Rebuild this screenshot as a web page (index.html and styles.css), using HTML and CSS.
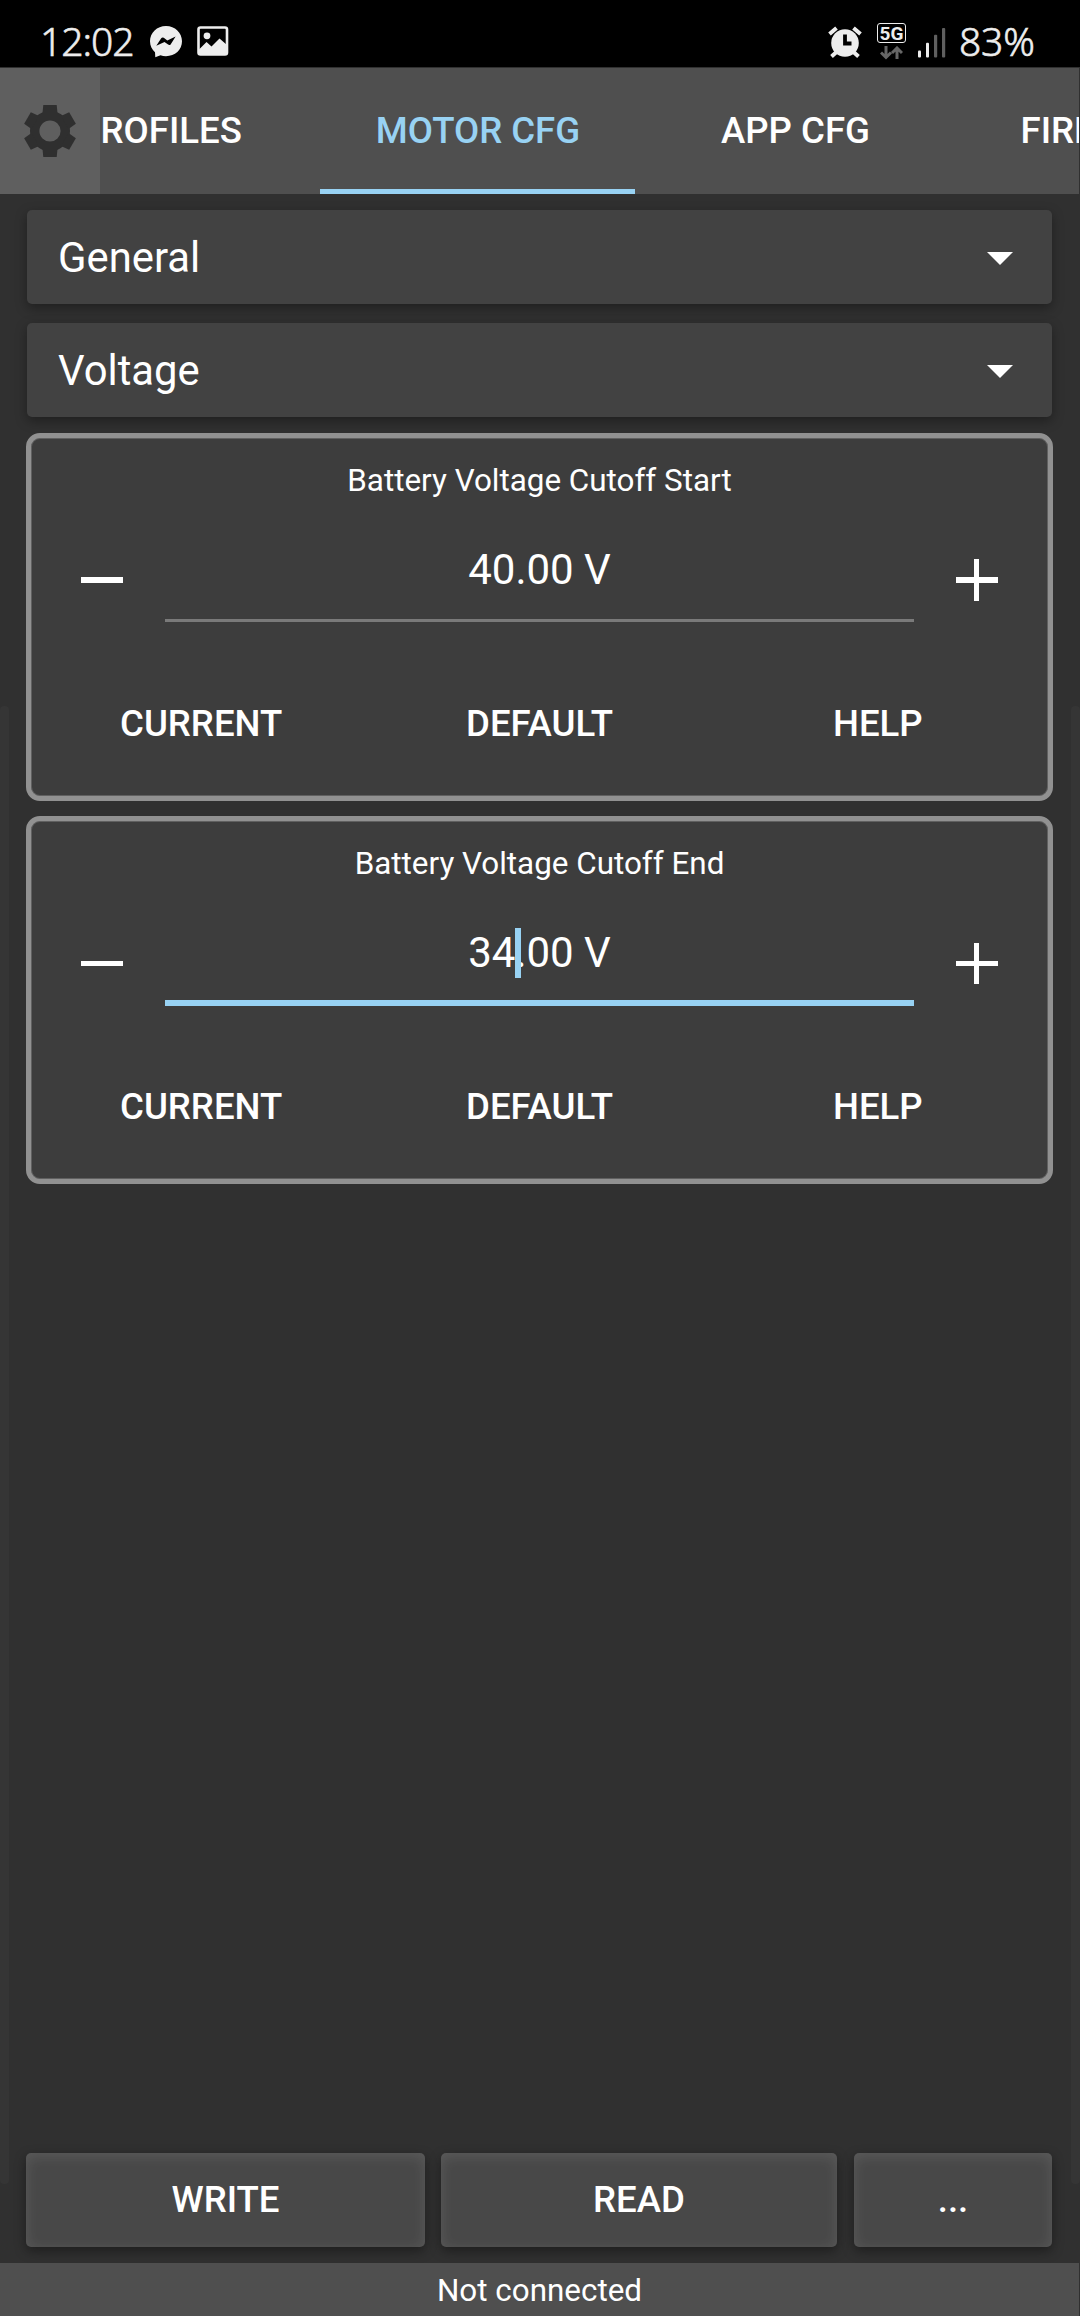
FILE: index.html
```html
<!DOCTYPE html>
<html lang="en">
<head>
<meta charset="utf-8">
<title>Motor configuration</title>
<link rel="stylesheet" href="styles.css">
</head>
<body>
<div class="screen">
  <header class="status">
    <span class="clock">12:02</span>
    <svg class="ic-messenger" width="32" height="32" viewBox="0 0 32 32">
      <path fill="#ededed" d="M16 0C7 0 0 6.600 0 15.300C0 19.800 2 23.700 5 26.300L5.300 31.300L10.500 29.300C12.200 29.900 14 30.200 16 30.200C25 30.200 32 23.800 32 15.300C32 6.600 25 0 16 0Z"/>
      <path fill="#000" d="M6.300 19.800L11.200 12.200Q12.300 10.800 13.800 11.800L17.300 14.500L25.600 10.500L20.800 18.200Q19.600 19.700 18.100 18.600L14.500 15.900Z"/>
    </svg>
    <svg class="ic-photo" width="32" height="30" viewBox="0 0 32 30">
      <rect x="1.500" y="1.500" width="28.500" height="27" rx="2" fill="none" stroke="#ededed" stroke-width="2.600"/>
      <circle cx="10" cy="9.800" r="3.400" fill="#ededed"/>
      <path fill="#ededed" d="M2 23.500L9.500 16L14.500 20.500L22.500 12.500L30 19V28.500H2Z"/>
    </svg>
    <span class="spacer"></span>
    <svg class="ic-alarm" width="34" height="32" viewBox="0 0 34 32">
      <g fill="none" stroke="#ededed" stroke-width="4">
        <path d="M1.500 8L8.500 2M32.500 8L25.500 2M8.500 26L3.500 30.500M25.500 26L30.500 30.500"/>
      </g>
      <circle cx="17" cy="17" r="13.800" fill="#ededed"/>
      <path d="M17 8.500V17.500H23.500" fill="none" stroke="#000" stroke-width="3.800"/>
    </svg>
    <div class="net">
      <span class="net-label">5G</span>
      <svg width="23" height="14" viewBox="0 0 23 14" fill="none" stroke="#666" stroke-width="3">
        <path d="M6 0V11M1 6.500L6 11.500L11 6.500M17 13V2M12 7L17 2L22 7"/>
      </svg>
    </div>
    <svg class="ic-signal" width="28" height="30" viewBox="0 0 28 30">
      <rect x="0" y="22.500" width="3" height="7" rx="1" fill="#ededed"/>
      <rect x="8" y="14.700" width="3" height="14.800" rx="1" fill="#ededed"/>
      <rect x="16" y="6.700" width="3.200" height="22.800" rx="1" fill="#5f5f5f"/>
      <rect x="24" y="0" width="3.200" height="29.500" rx="1" fill="#5f5f5f"/>
    </svg>
    <span class="battery">83%</span>
  </header>

  <nav class="topbar">
    <button class="gear" aria-label="Settings">
      <svg width="54" height="54" viewBox="-27 -27 54 54">
        <circle r="15.300" fill="none" stroke="#2f2f2f" stroke-width="9.400"/>
        <g fill="#2f2f2f">
          <path id="tooth" d="M-6.700 -26H6.700L7.600 -17H-7.600Z"/>
          <use href="#tooth" transform="rotate(60)"/>
          <use href="#tooth" transform="rotate(120)"/>
          <use href="#tooth" transform="rotate(180)"/>
          <use href="#tooth" transform="rotate(240)"/>
          <use href="#tooth" transform="rotate(300)"/>
        </g>
      </svg>
    </button>
    <div class="tabs">
      <div class="tab tab-first">PROFILES</div>
      <div class="tab active">MOTOR CFG</div>
      <div class="tab">APP CFG</div>
      <div class="tab">FIRMWARE</div>
    </div>
  </nav>

  <main class="content">
    <div class="select"><span>General</span><svg width="26" height="13" viewBox="0 0 26 13"><path d="M0 0H26L13 13Z" fill="#fff"/></svg></div>
    <div class="select"><span>Voltage</span><svg width="26" height="13" viewBox="0 0 26 13"><path d="M0 0H26L13 13Z" fill="#fff"/></svg></div>

    <section class="card">
      <h2 class="card-title">Battery Voltage Cutoff Start</h2>
      <div class="spin">
        <svg class="sign" width="42" height="42" viewBox="0 0 42 42"><path d="M0 18H42V24H0Z" fill="#fff"/></svg>
        <div class="field"><span>40.00 V</span></div>
        <svg class="sign" width="42" height="42" viewBox="0 0 42 42"><path d="M0 18H42V24H0ZM18 0H23V42H18Z" fill="#fff"/></svg>
      </div>
      <div class="actions"><span>CURRENT</span><span>DEFAULT</span><span>HELP</span></div>
    </section>

    <section class="card">
      <h2 class="card-title">Battery Voltage Cutoff End</h2>
      <div class="spin">
        <svg class="sign" width="42" height="42" viewBox="0 0 42 42"><path d="M0 19H42V24H0Z" fill="#fff"/></svg>
        <div class="field focused"><span>34<i class="caret"></i>.00 V</span></div>
        <svg class="sign" width="42" height="42" viewBox="0 0 42 42"><path d="M0 19H42V24H0ZM18 1H23V42H18Z" fill="#fff"/></svg>
      </div>
      <div class="actions"><span>CURRENT</span><span>DEFAULT</span><span>HELP</span></div>
    </section>
    <i class="edge edge-left"></i>
    <i class="edge edge-right"></i>
  </main>

  <div class="buttons">
    <button class="btn">WRITE</button>
    <button class="btn">READ</button>
    <button class="btn btn-more">...</button>
  </div>
  <footer class="footer">Not connected</footer>
</div>
</body>
</html>
```
FILE: styles.css
```css
* { box-sizing: border-box; }
body { margin: 0; background: #303030; color: #fff; font-family: Roboto, sans-serif; }
button { border: 0; padding: 0; font: inherit; color: inherit; }
svg { display: block; flex: none; }

.screen { width: 1080px; height: 2316px; display: flex; flex-direction: column; overflow: hidden; background: #303030; }

.status {
  height: 67px; flex: none; background: #000; color: #ededed;
  display: flex; align-items: flex-start; padding: 0 45px 0 40px;
  font-family: "Noto Sans", sans-serif; font-weight: 300; font-size: 39px; line-height: 50px;
}
.clock, .battery { -webkit-text-stroke: .6px #ededed; }
.clock { width: 110px; padding-top: 16px; letter-spacing: -1px; white-space: nowrap; }
.ic-messenger { margin: 26px 15px 0 0; }
.ic-photo { margin-top: 26px; }
.spacer { flex: 1; }
.ic-alarm { margin: 26px 15px 0 0; }
.net { width: 29px; margin: 23px 12px 0 0; display: flex; flex-direction: column; align-items: center; gap: 3px; }
.net-label {
  width: 29px; height: 20px; border: 1px solid #ededed; border-radius: 3px;
  font: 700 19px/19px Roboto, sans-serif; text-align: center;
}
.ic-signal { margin: 28px 13px 0 0; }
.battery { width: 76px; padding-top: 16px; letter-spacing: -.2px; white-space: nowrap; }

.topbar { height: 126px; flex: none; margin: 1px 1px 0 0; background: #4f4f4f; display: flex; }
.gear { width: 100px; flex: none; background: #5f5f5f; display: flex; align-items: center; justify-content: center; }
.tabs { flex: 1; min-width: 0; display: flex; overflow: hidden; gap: 2.5px; }
.tab {
  width: 315px; flex: none; display: flex; align-items: center; justify-content: center;
  padding: 0 0 2px 1px; font-weight: 500; font-size: 36.6px; white-space: nowrap;
}
.tab-first { margin-left: -97.5px; padding: 0 1px 2px 0; }
.tab.active { color: #98d2f3; box-shadow: inset 0 -5px #98d2f3; }

.content { flex: 1; position: relative; padding: 16px 28px 0 27px; }
.select {
  height: 94px; margin-bottom: 19px; padding: 0 39px 0 31px; border-radius: 5px; background: #424242;
  box-shadow: 0 4px 12px rgba(0, 0, 0, .35);
  display: flex; align-items: center; justify-content: space-between; font-size: 41.8px;
}
.select svg { margin-top: 2px; }
.select + .card { margin-top: -3px; }
.card {
  height: 368px; margin: 0 0 15px -1px; width: 1027px; border: 5px solid #919191; border-radius: 14px;
  background: #3d3d3d; box-shadow: inset 0 0 0 1px #606060; padding: 23px 1px 0;
  display: flex; flex-direction: column;
}
.card-title { margin: 0; font-weight: 400; font-size: 31.4px; line-height: 40px; text-align: center; }
.spin { height: 121px; padding: 0 49px; display: flex; align-items: flex-start; }
.sign { margin-top: 58px; }
.field {
  flex: 1; height: 121px; margin: 0 42px; border-bottom: 3px solid #7a7a7a;
  padding-top: 44px; text-align: center; font-size: 42px; line-height: 50px;
}
.field.focused { height: 122px; border-bottom: 6px solid #98d2f3; }
.field span { position: relative; white-space: pre; }
.caret { position: absolute; left: 47px; top: 0; width: 6px; height: 50px; background: #98d2f3; }
.actions { display: flex; padding-top: 77px; font-weight: 500; font-size: 36.6px; line-height: 50px; text-align: center; }
.actions span { flex: 1; }

.edge { position: absolute; top: 512px; width: 9px; height: 1478px; background: #353535; border-radius: 4px; }
.edge-left { left: 0; }
.edge-right { right: 0; }

.buttons { flex: none; display: flex; gap: 16px; padding: 0 28px 16px 26px; height: 110px; }
.btn {
  width: 396px; border-radius: 5px; background: #484848; font-weight: 500; font-size: 36.6px; padding: 0 0 2px;
  box-shadow: 0 4px 12px rgba(0, 0, 0, .4), inset 0 3px 14px rgba(255, 255, 255, .11);
}
.btn:first-child { width: 399px; }
.btn-more { width: 198px; margin-left: 1px; }
.footer { height: 53px; flex: none; margin-right: 1px; background: #4f4f4f; text-align: center; font-size: 31.4px; line-height: 56px; }
```
